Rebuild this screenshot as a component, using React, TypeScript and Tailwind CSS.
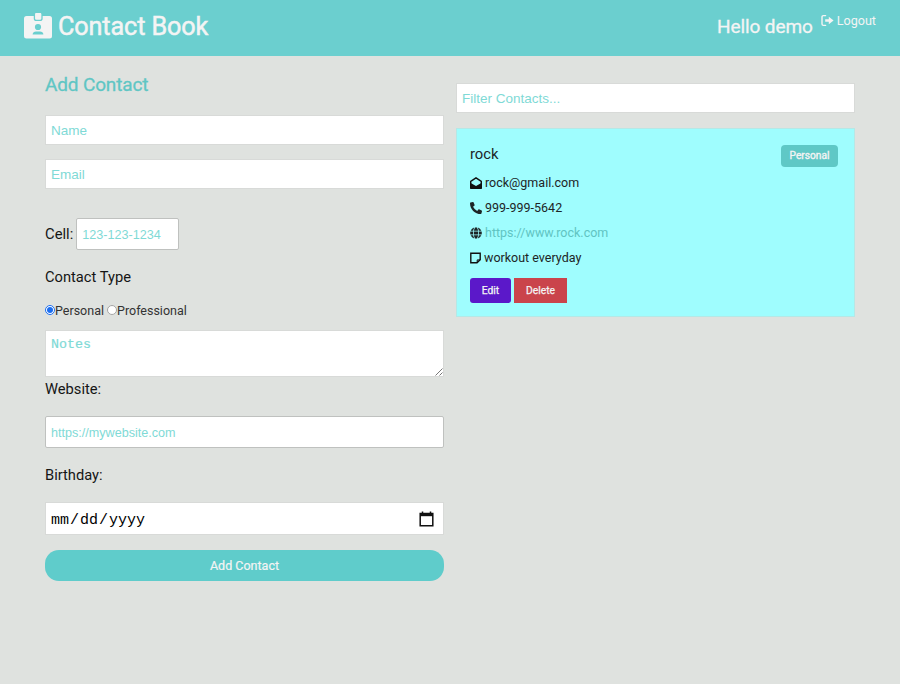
import type { ReactNode } from "react";
import { FaPhoneAlt, FaGlobe } from "react-icons/fa";

const field =
  "block w-full border border-[#d8dad8] bg-white px-[5px] font-['Liberation_Sans',sans-serif] text-[13.5px] text-[#333] placeholder:text-[#7fdad6] placeholder:opacity-100 outline-none";

function BadgeIcon() {
  return (
    <svg className="h-[26px] w-[28px]" viewBox="0 0 28 26" fill="none">
      <rect x="0" y="3" width="28" height="22.4" rx="2.5" fill="#f4f4f4" />
      <rect x="10.4" y="-0.8" width="7.6" height="8.2" rx="2" fill="#f4f4f4" stroke="#6bcfcf" strokeWidth="1.3" />
      <circle cx="14" cy="14" r="3.1" fill="#6bcfcf" />
      <path d="M8.6 21.6C8.6 19.6 10.2 18.4 12 18.4H16C17.8 18.4 19.4 19.6 19.4 21.6Z" fill="#6bcfcf" />
    </svg>
  );
}

function LogoutIcon() {
  return (
    <svg className="size-[13px]" viewBox="0 0 13 13" fill="none">
      <path d="M4.6 1.6H2.4Q1 1.6 1 3V10Q1 11.4 2.4 11.4H4.6" stroke="#f4f4f4" strokeWidth="1.4" strokeLinecap="round" />
      <path d="M4.2 5.2H7.8V2.7L12.6 6.5L7.8 10.3V7.8H4.2Z" fill="#f4f4f4" />
    </svg>
  );
}

function OpenMailIcon() {
  return (
    <svg className="mr-[3px] size-[12px]" viewBox="0 0 12 12" fill="none">
      <path d="M0.7 4.4L6 0.8L11.3 4.4V11.2H0.7Z" stroke="#111" strokeWidth="1.4" strokeLinejoin="round" />
      <path d="M0.7 6L6 9L11.3 6V11.3H0.7Z" fill="#111" />
    </svg>
  );
}

function NoteIcon() {
  return (
    <svg className="mr-[3px] h-[12px] w-[11px]" viewBox="0 0 11 12" fill="none" stroke="#111">
      <path d="M0.8 1.2H10.2V7.7L7 10.8H0.8Z" strokeWidth="1.4" />
      <path d="M7.2 10.8V7.9H10.2" strokeWidth="1" />
    </svg>
  );
}

function Detail({ icon, children }: { icon: ReactNode; children: ReactNode }) {
  return (
    <li className="flex h-[25px] items-center whitespace-pre text-[12.5px] text-[#1d2526]">
      {icon}
      <span className="mt-px">{children}</span>
    </li>
  );
}

function Navbar() {
  return (
    <header className="flex h-14 justify-between bg-[#6bcfcf] pl-6 pr-6 text-[#f4f4f4]">
      <h1 className="flex h-[52px] items-center gap-[6px] text-[25.2px]">
        <BadgeIcon />
        <span className="mt-[2px] tracking-[-0.1px] [-webkit-text-stroke:0.5px_#f4f4f4]">Contact Book</span>
      </h1>
      <div className="flex">
        <span className="mr-[8px] flex h-[54px] items-center text-[19px] tracking-[-0.1px] [-webkit-text-stroke:0.3px_#f4f4f4]">
          Hello demo
        </span>
        <a className="flex h-[41px] items-center gap-[3px] text-[12.6px]">
          <LogoutIcon />
          <span className="mt-[2px]">Logout</span>
        </a>
      </div>
    </header>
  );
}

function ContactForm() {
  return (
    <form className="w-[399px]">
      <h2 className="flex h-[59px] items-center text-[19px] tracking-[-0.15px] text-[#5fc6c4] [-webkit-text-stroke:0.3px_#5fc6c4]">
        Add Contact
      </h2>
      <input className={`${field} h-[30px]`} placeholder="Name" />
      <input className={`${field} mt-[14px] h-[30px]`} placeholder="Email" />
      <div className="mt-[29px] flex h-8 items-center gap-[3px] text-[14.8px]">
        <label>Cell:</label>
        <input
          className="h-8 w-[103px] rounded-[2px] border border-[#bfc1bf] bg-white px-[5px] pt-[2px] font-['Liberation_Sans',sans-serif] text-[12.6px] outline-none placeholder:text-[#7fdad6] placeholder:opacity-100"
          placeholder="123-123-1234"
        />
      </div>
      <div className="mt-[15px] flex h-6 items-center text-[14.7px]">Contact Type</div>
      <div className="mt-[10px] flex h-[22px] items-center text-[12.5px] text-[#333]">
        <span className="flex size-[10px] items-center justify-center rounded-full border border-[#1a6df0] bg-white">
          <span className="size-[6px] rounded-full bg-[#1a6df0]" />
        </span>
        <span className="mt-[2px]">Personal</span>
        <span className="ml-[3px] size-[10px] rounded-full border border-[#a5a5a5] bg-white" />
        <span className="mt-[2px]">Professional</span>
      </div>
      <div className="relative mt-[9px] h-[47px]">
        <textarea
          className="block h-[47px] w-full resize-none border border-[#d8dad8] bg-white px-[5px] pt-[6px] font-['Liberation_Mono',monospace] text-[13.33px] leading-4 outline-none [-webkit-text-stroke:0.2px_#7fdad6] placeholder:text-[#7fdad6] placeholder:opacity-100"
          placeholder="Notes"
        />
        <svg className="absolute bottom-[1px] right-[1px] size-2" viewBox="0 0 8 8" stroke="#777" strokeWidth="1">
          <path d="M0.5 7.5L7.5 0.5M4.5 7.5L7.5 4.5" />
        </svg>
      </div>
      <div className="flex h-6 items-center text-[14.7px]">Website:</div>
      <input
        className="mt-[15px] block h-8 w-full rounded-[2px] border border-[#bfc1bf] bg-white px-[5px] pt-[2px] font-['Liberation_Sans',sans-serif] text-[12.6px] outline-none placeholder:text-[#7fdad6] placeholder:opacity-100"
        placeholder="https://mywebsite.com"
      />
      <div className="mt-[15px] flex h-6 items-center text-[14.7px]">Birthday:</div>
      <div className="mt-[15px] flex h-[33px] items-center justify-between border border-[#d8dad8] bg-white pl-[5px] pr-[9px] font-['Liberation_Mono',monospace] text-[15px] text-black">
        <span className="mt-[5px] flex gap-px">
          <span>mm</span>
          <span>/</span>
          <span>dd</span>
          <span>/</span>
          <span>yyyy</span>
        </span>
        <svg className="h-4 w-[15px]" viewBox="0 0 15 16" fill="none" stroke="#111">
          <path d="M1.2 2.5H13.8V14.8H1.2Z" strokeWidth="1.5" />
          <path d="M1 3.7H14" strokeWidth="3" />
          <path d="M3.5 0.5V3M11.5 0.5V3" strokeWidth="1.5" />
        </svg>
      </div>
      <button
        type="button"
        className="mt-[15px] flex h-[31px] w-full items-center justify-center rounded-[14px] bg-[#5fcccb] pt-px text-[12.5px] text-[#f4f4f4] [-webkit-text-stroke:0.2px_#f4f4f4]"
      >
        Add Contact
      </button>
    </form>
  );
}

function ContactCard() {
  return (
    <article className="mt-[15px] h-[189px] border border-[#b5e8e6] bg-[#9ffdfe] pl-[13px] pr-[16px] pt-[15px]">
      <div className="flex h-[26px] items-start justify-between">
        <h3 className="mt-[-2px] flex h-6 items-center text-[14.8px] text-[#1d2526]">rock</h3>
        <span className="mt-[0.5px] flex h-[22px] w-[57px] items-center justify-center rounded-[4px] bg-[#5fc8c6] pt-px text-[10.2px] text-[#f4f4f4] [-webkit-text-stroke:0.35px_#f4f4f4]">
          Personal
        </span>
      </div>
      <ul>
        <Detail icon={<OpenMailIcon />}>rock@gmail.com</Detail>
        <Detail icon={<FaPhoneAlt className="mr-[3px] size-[12px]" />}>999-999-5642</Detail>
        <Detail icon={<FaGlobe className="mr-[3px] size-[12px]" />}>
          <a className="text-[#5fc4c2]">https://www.rock.com</a>
        </Detail>
        <Detail icon={<NoteIcon />}>workout everyday</Detail>
      </ul>
      <div className="mt-[8px] flex gap-[3px] text-[10.3px] text-[#f4f4f4] [-webkit-text-stroke:0.25px_#f4f4f4]">
        <button className="h-[25px] w-[41px] rounded-[3px] bg-[#5b18c9]">Edit</button>
        <button className="h-[25px] w-[53px] bg-[#ca444b]">Delete</button>
      </div>
    </article>
  );
}

export default function App() {
  return (
    <div className="h-[684px] bg-[#dfe2df] font-[Roboto,sans-serif] text-[#151515]">
      <Navbar />
      <main className="flex gap-[12px] pl-[45px]">
        <ContactForm />
        <section className="w-[399px] pt-[27px]">
          <input className={`${field} h-[30px]`} placeholder="Filter Contacts..." />
          <ContactCard />
        </section>
      </main>
    </div>
  );
}
